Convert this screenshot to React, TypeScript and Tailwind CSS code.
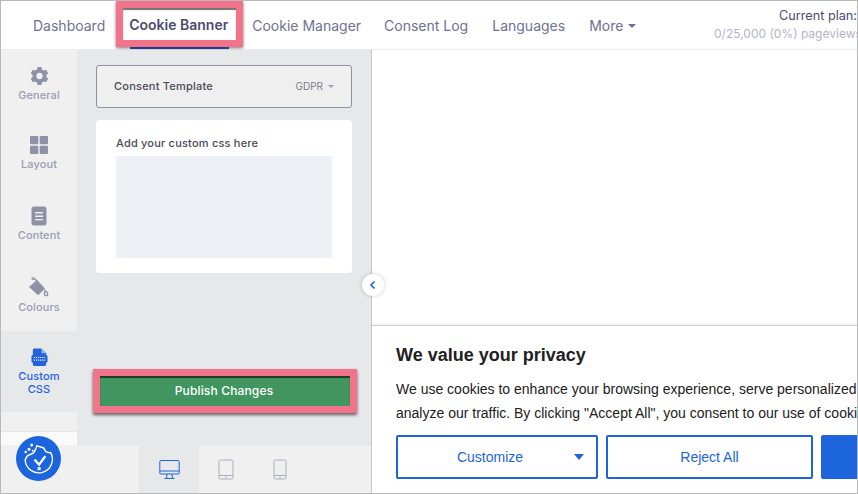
import React from "react";

const Nav = ({ children, className = "" }: { children: React.ReactNode; className?: string }) => (
  <div className={`text-[14px] leading-[17px] text-[#6f7194] ${className}`}>{children}</div>
);

const Side = ({ label, icon, h, gap, active }: { label: React.ReactNode; icon: React.ReactNode; h: string; gap: string; active?: boolean }) => (
  <div className={`${h} flex flex-col items-center pt-[16px] text-center text-[11px] font-medium leading-[13px] tracking-[0.1px] ${active ? "bg-[#e7e8ea] text-[#2563dc]" : "text-[#9a9cb0]"}`}>
    <div className="flex h-[20px] items-center justify-center">{icon}</div>
    <div className={gap}>{label}</div>
  </div>
);

const Gear = () => (
  <svg width="19" height="20" viewBox="0 0 20 20" fill="#8f92a7">
    <circle cx="10" cy="10" r="5.4" fill="none" stroke="#8f92a7" strokeWidth="4.2" />
    <rect x="7.6" y="0.6" width="4.8" height="3.6" rx="1" />
    <rect x="7.6" y="15.8" width="4.8" height="3.6" rx="1" />
    <rect x="7.6" y="0.6" width="4.8" height="3.6" rx="1" transform="rotate(60 10 10)" />
    <rect x="7.6" y="15.8" width="4.8" height="3.6" rx="1" transform="rotate(60 10 10)" />
    <rect x="7.6" y="0.6" width="4.8" height="3.6" rx="1" transform="rotate(120 10 10)" />
    <rect x="7.6" y="15.8" width="4.8" height="3.6" rx="1" transform="rotate(120 10 10)" />
  </svg>
);

const Grid = () => (
  <svg width="18" height="18" viewBox="0 0 18 18" fill="#8f92a7">
    <rect x="0" y="0" width="8.3" height="8.3" rx="1" />
    <rect x="9.7" y="0" width="8.3" height="8.3" rx="1" />
    <rect x="0" y="9.7" width="8.3" height="8.3" rx="1" />
    <rect x="9.7" y="9.7" width="8.3" height="8.3" rx="1" />
  </svg>
);

const Doc = () => (
  <svg width="16" height="20" viewBox="0 0 16 20">
    <rect x="0.5" y="0.5" width="15" height="19" rx="2.5" fill="#8f92a7" />
    <path d="M4 6.8h8M4 10.2h8M4 13.6h8" stroke="#f0f0f1" strokeWidth="1.4" />
  </svg>
);

const Bucket = () => (
  <svg width="22" height="20" viewBox="0 0 22 20">
    <path d="M1 10 9 3l8 8.5-5.5 5.5a2 2 0 01-2.8 0z" fill="#8f92a7" />
    <path d="M9 4 5.6 1" stroke="#8f92a7" strokeWidth="1.3" fill="none" />
    <circle cx="5" cy="1.5" r="1.2" fill="none" stroke="#8f92a7" strokeWidth="1" />
    <path d="M17 13.5c1.4 1 2.8 2.4 2.8 3.6a1.7 1.7 0 01-3.4 0c0-.6.2-2.2.6-3.6z" fill="none" stroke="#8f92a7" strokeWidth="1.4" />
  </svg>
);

const CssFile = () => (
  <svg width="17" height="20" viewBox="0 0 18 20">
    <path d="M3.5 1h7.5l5 5v12a1.5 1.5 0 01-1.5 1.5h-11A1.5 1.5 0 012 18V2.5A1.5 1.5 0 013.5 1z" fill="#2563dc" />
    <path d="M11 1v5h5z" fill="#8fb0ee" />
    <rect x="0.5" y="8" width="17" height="8" rx="1.5" fill="#2563dc" />
    <path d="M3 10.5h12M3 13.3h12" stroke="#dfe5f3" strokeWidth="1.2" strokeDasharray="1.3 0.9" />
  </svg>
);

const Logo = () => (
  <svg width="45" height="45" viewBox="0 0 45 45" className="absolute left-[15px] top-[435px]">
    <circle cx="22.5" cy="22.5" r="22.5" fill="#1c65dc" />
    <path
      d="M9.2 24A13.6 13.6 0 1034.7 16.7Q30 16.5 29 14.7 28.5 11.5 25 11 22 10.5 20.7 9.7 20.5 12 19.3 13.5 18.5 17.5 14 18.5 10.5 19.5 9.2 24Z"
      fill="none"
      stroke="#fff"
      strokeWidth="1.4"
      strokeLinejoin="round"
    />
    <path d="M18.5 23.5l4.6 5.2 6.2-8.6" fill="none" stroke="#fff" strokeWidth="2.3" />
    <rect x="21.6" y="31.2" width="3" height="3" fill="#fff" />
    <circle cx="15.7" cy="9" r="1.5" fill="#fff" />
    <circle cx="13" cy="13.3" r="1.5" fill="#fff" />
    <circle cx="9.7" cy="16" r="1.2" fill="#fff" />
    <circle cx="16.7" cy="14.7" r="1" fill="#fff" />
  </svg>
);

const Desktop = () => (
  <svg width="21" height="21" viewBox="0 0 21 21" fill="none" stroke="#2563dc" strokeWidth="1">
    <rect x="0.8" y="1.5" width="19.4" height="13.5" rx="1" />
    <path d="M0.8 12h19.4" />
    <path d="M8.2 15l-.7 4M12.8 15l.7 4M5.5 19.5h10" />
  </svg>
);

const Tablet = () => (
  <svg width="16" height="21" viewBox="0 0 16 21" fill="none" stroke="#abadbe" strokeWidth="1">
    <rect x="1" y="1" width="14" height="19" rx="1.5" />
    <path d="M1 16.5h14" />
    <circle cx="8" cy="18.2" r=".4" />
  </svg>
);

const Phone = () => (
  <svg width="14" height="21" viewBox="0 0 14 21" fill="none" stroke="#abadbe" strokeWidth="1">
    <rect x="1" y="1" width="12" height="19" rx="1.5" />
    <path d="M1 16.5h12" />
    <circle cx="7" cy="18.2" r=".4" />
  </svg>
);

export default function App() {
  return (
    <div className="relative flex h-[494px] w-[858px] flex-col overflow-hidden border border-[#b9b9b9] bg-white font-['Inter',sans-serif]">
      <header className="flex h-[49px] shrink-0 items-start border-b border-[#ececee] bg-white">
        <Nav className="ml-[32px] mt-[16px]">Dashboard</Nav>
        <div className="ml-[11px] h-[48px]">
          <div className="h-[46px] w-[127px] border-[7px] border-[#f1748a] bg-white shadow-[0_1px_3px_rgba(0,0,0,0.55),inset_0_2px_1px_rgba(0,0,0,0.55)]">
            <div className="mt-[8px] pr-[2px] text-center text-[14px] font-semibold leading-[17px] text-[#4c4b6e]">Cookie Banner</div>
          </div>
          <div className="mx-auto h-[2px] w-[99px] bg-[#1e3f8f]" />
        </div>
        <Nav className="ml-[9px] mt-[16px]">Cookie Manager</Nav>
        <Nav className="ml-[23px] mt-[16px]">Consent Log</Nav>
        <Nav className="ml-[24px] mt-[16px]">Languages</Nav>
        <Nav className="ml-[24px] mt-[16px] flex items-center">
          More
          <span className="ml-[5px] mt-[1px] h-0 w-0 border-x-[4px] border-t-[4px] border-x-transparent border-t-[#6f7194]" />
        </Nav>
        <div className="ml-auto mt-[7px] w-[143px] shrink-0 overflow-hidden whitespace-nowrap text-right">
          <div className="text-[12.7px] leading-[16px] text-[#4c4b6e]">Current plan:</div>
          <div className="mt-[3px] text-[12px] leading-[14px] text-[#b3b4c8]">0/25,000 (0%) pageviews</div>
        </div>
      </header>

      <div className="flex min-h-0 flex-1">
        <div className="relative flex w-[371px] shrink-0 flex-col border-r border-[#c6c6c8] bg-[#e7e8ea]">
          <div className="flex min-h-0 flex-1">
            <aside className="w-[76px] shrink-0 bg-[#f0f0f1]">
              <Side h="h-[69px]" gap="mt-[3px]" label="General" icon={<Gear />} />
              <Side h="h-[71px]" gap="mt-[3px]" label="Layout" icon={<Grid />} />
              <Side h="h-[71px]" gap="mt-[3px]" label="Content" icon={<Doc />} />
              <Side h="h-[70px]" gap="mt-[4px]" label="Colours" icon={<Bucket />} />
              <Side h="h-[81px]" gap="mt-[3px]" active label={<>Custom<br />CSS</>} icon={<CssFile />} />
              <div className="mt-[19px] h-[14px] border-t border-[#e6e6e8] bg-[#fafafa]" />
            </aside>
            <main className="flex min-w-0 flex-1 flex-col px-[19px] pt-[15px]">
              <div className="flex h-[43px] items-center justify-between rounded-[3px] border border-[#8f90a8] bg-[#efeff0] pl-[17px] pr-[17px]">
                <span className="text-[11px] font-medium tracking-[0.22px] text-[#4a4a55]">Consent Template</span>
                <span className="flex items-center text-[10px] text-[#7b7c8a]">
                  GDPR
                  <span className="ml-[5px] h-0 w-0 border-x-[3.5px] border-t-[3.5px] border-x-transparent border-t-[#a0a1b0]" />
                </span>
              </div>
              <div className="mt-[12px] h-[153px] rounded-[4px] bg-white px-[20px] pt-[16px]">
                <div className="text-[11px] font-medium leading-[14px] tracking-[0.2px] text-[#4a4a55]">Add your custom css here</div>
                <div className="mt-[6px] h-[102px] rounded-[2px] bg-[#edf0f5]" />
              </div>
              <div className="-ml-[3px] mt-[96px] h-[44px] w-[264px] border-[7px] border-[#f1748a] bg-[#41955f] pr-[2px] text-center text-[12px] font-medium leading-[30px] tracking-[0.15px] text-white shadow-[0_2px_3px_rgba(0,0,0,0.6),inset_0_2px_1px_rgba(0,0,0,0.6)]">
                Publish Changes
              </div>
            </main>
          </div>
          <div className="flex h-[47px] shrink-0 bg-[#f0f0f1]">
            <div className="ml-[138px] flex h-full w-[60px] items-center justify-center bg-[#e7e8ea]"><Desktop /></div>
            <div className="flex h-full w-[54px] items-center justify-center"><Tablet /></div>
            <div className="flex h-full w-[54px] items-center justify-center"><Phone /></div>
          </div>
          <button className="absolute left-[361px] top-[224px] flex h-[22px] w-[22px] items-center justify-center rounded-full bg-white shadow-[0_0_4px_rgba(0,0,0,0.2)]">
            <svg width="10" height="10" viewBox="0 0 10 10" fill="none" stroke="#2563dc" strokeWidth="1.6"><path d="M6.5 1.5 3 5l3.5 3.5" /></svg>
          </button>
        </div>

        <div className="flex min-w-0 flex-1 flex-col bg-white">
          <div className="flex-1" />
          <section className="h-[168px] shrink-0 overflow-hidden border-t border-[#cfcfd1] pl-[24px] pt-[19px] font-['Liberation_Sans',sans-serif] shadow-[0_-1px_3px_rgba(0,0,0,0.08)]">
            <h2 className="whitespace-nowrap text-[18px] font-bold leading-[21px] text-[#212121]">We value your privacy</h2>
            <p className="mt-[11px] w-[600px] whitespace-nowrap text-[14px] leading-[24px] text-[#212121]">
              We use cookies to enhance your browsing experience, serve personalized ads or content, and<br />
              analyze our traffic. By clicking "Accept All", you consent to our use of cookies.
            </p>
            <div className="mt-[10px] flex w-[600px] gap-[8px]">
              <div className="relative flex h-[44px] w-[202px] shrink-0 items-center justify-center rounded-[2px] border-2 border-[#1c65dc] pr-[14px] text-[14px] text-[#1c65dc]">
                Customize
                <span className="absolute right-[12px] top-[17px] h-0 w-0 border-x-[5px] border-t-[6px] border-x-transparent border-t-[#1c65dc]" />
              </div>
              <div className="flex h-[44px] w-[207px] shrink-0 items-center justify-center rounded-[2px] border-2 border-[#1c65dc] text-[14px] text-[#1c65dc]">Reject All</div>
              <div className="h-[44px] w-[200px] shrink-0 rounded-[2px] bg-[#1c65dc]" />
            </div>
          </section>
        </div>
      </div>
      <Logo />
    </div>
  );
}
